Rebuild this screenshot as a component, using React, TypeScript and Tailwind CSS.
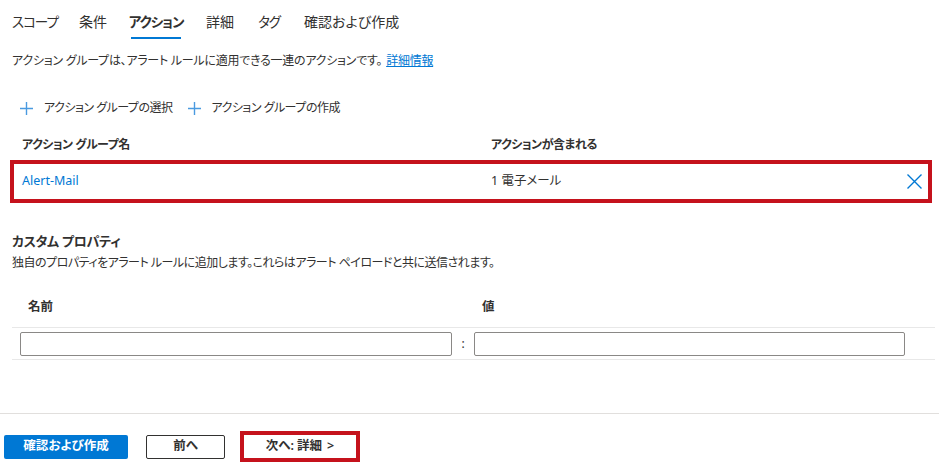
import React from 'react';

const tabs = [
  { label: 'スコープ', w: 'w-[42px]', kana: true },
  { label: '条件', w: 'w-[27px]', kana: false },
  { label: 'アクション', w: 'w-[50px]', kana: true },
  { label: '詳細', w: 'w-[27px]', kana: false },
  { label: 'タグ', w: 'w-[21px]', kana: true },
  { label: '確認および作成', w: 'w-[88px]', kana: false },
];

function PlusIcon() {
  return (
    <svg width="13" height="13" viewBox="0 0 13 13" fill="none">
      <path d="M6.5 0v13M0 6.5h13" stroke="#4a9ae0" strokeWidth="1.4" />
    </svg>
  );
}

function CloseIcon() {
  return (
    <svg width="15" height="15" viewBox="0 0 15 15" fill="none">
      <path d="M0.5 0.5l14 14M14.5 0.5l-14 14" stroke="#0078d4" strokeWidth="1.4" />
    </svg>
  );
}

export default function App() {
  return (
    <div
      className="w-[939px] h-[468px] bg-white flex flex-col overflow-hidden text-[#323130] [font-feature-settings:'palt']"
      style={{ fontFamily: "'Noto Sans', 'Noto Sans CJK JP', sans-serif" }}
    >
      {/* tabs */}
      <div className="flex gap-[25px] px-[12px] h-[39px]">
        {tabs.map((t) => {
          const active = t.label === 'アクション';
          return (
            <div
              key={t.label}
              className={`${t.w} h-[39px] pt-[12px] leading-[20px] whitespace-nowrap flex ${
                t.kana ? 'text-[13.5px] tracking-[-1px]' : 'text-[14px]'
              } ${active ? 'justify-center font-bold border-b-2 border-[#0078d4]' : 'justify-start'}`}
            >
              {t.label}
            </div>
          );
        })}
      </div>

      <p className="mt-[14px] px-[12px] text-[12px] leading-[16px] tracking-[-0.25px]">
        アクション グループは、アラート ルールに適用できる一連のアクションです。
        <span className="text-[#0078d4] underline ml-[4px]">詳細情報</span>
      </p>

      {/* toolbar */}
      <div className="mt-[23px] h-[32px] flex items-center pl-[20px] gap-[16px] text-[12px] tracking-[-0.5px]">
        <div className="flex items-center gap-[11px]">
          <PlusIcon />
          <span>アクション グループの選択</span>
        </div>
        <div className="flex items-center gap-[10px]">
          <PlusIcon />
          <span>アクション グループの作成</span>
        </div>
      </div>

      {/* action group table */}
      <div className="mx-[10px] w-[922px]">
        <div className="h-[36px] flex items-end pb-[5px] pl-[12px] text-[12px] font-bold leading-[20px] tracking-[-0.5px]">
          <div className="w-[469px]">アクション グループ名</div>
          <div>アクションが含まれる</div>
        </div>
        <div className="h-[43px] border-4 border-[#c5121c] flex items-center pl-[8px] pr-[6px] text-[12.5px]">
          <div className="w-[469px] text-[#0078d4]">Alert-Mail</div>
          <div className="flex-1">1 電子メール</div>
          <CloseIcon />
        </div>
      </div>

      {/* custom properties */}
      <div className="px-[12px]">
        <h2 className="mt-[28px] text-[13px] font-bold leading-[20px] tracking-[-0.3px]">カスタム プロパティ</h2>
        <p className="mt-[3px] text-[12px] leading-[18px] tracking-[-0.5px]">
          独自のプロパティをアラート ルールに追加します。これらはアラート ペイロードと共に送信されます。
        </p>
        <div className="w-[923px]">
          <div className="flex pt-[25px] pb-[10px] border-b border-[#e8e8e8] text-[12.5px] font-bold leading-[20px]">
            <div className="w-[462px] pl-[16px]">名前</div>
            <div className="pl-[8px]">値</div>
          </div>
          <div className="flex items-center pt-[4px] pb-[3px] border-b border-[#e8e8e8] pl-[8px]">
            <input className="w-[432px] h-[24px] border border-[#8a8886] rounded-[2px] outline-none" />
            <span className="w-[22px] text-center text-[12px] leading-[24px]">:</span>
            <input className="w-[431px] h-[24px] border border-[#8a8886] rounded-[2px] outline-none" />
          </div>
        </div>
      </div>

      {/* footer */}
      <div className="mt-auto h-[55px] border-t border-[#e1dfdd] pt-[17px] pl-[4px] flex items-start gap-[15px]">
        <div className="h-[31px] flex items-center gap-[18px]">
          <button className="w-[124px] h-[24px] bg-[#0078d4] text-white rounded-[2px] text-[12.5px] font-bold">
            確認および作成
          </button>
          <button className="w-[79px] h-[24px] border border-[#323130] rounded-[2px] text-[12.5px] font-semibold">
            前へ
          </button>
        </div>
        <div className="w-[120px] h-[31px] border-4 border-[#c5121c] flex items-center justify-center gap-[5px] text-[12.5px] font-semibold">
          <span>次へ: 詳細</span>
          <span>&gt;</span>
        </div>
      </div>
    </div>
  );
}
